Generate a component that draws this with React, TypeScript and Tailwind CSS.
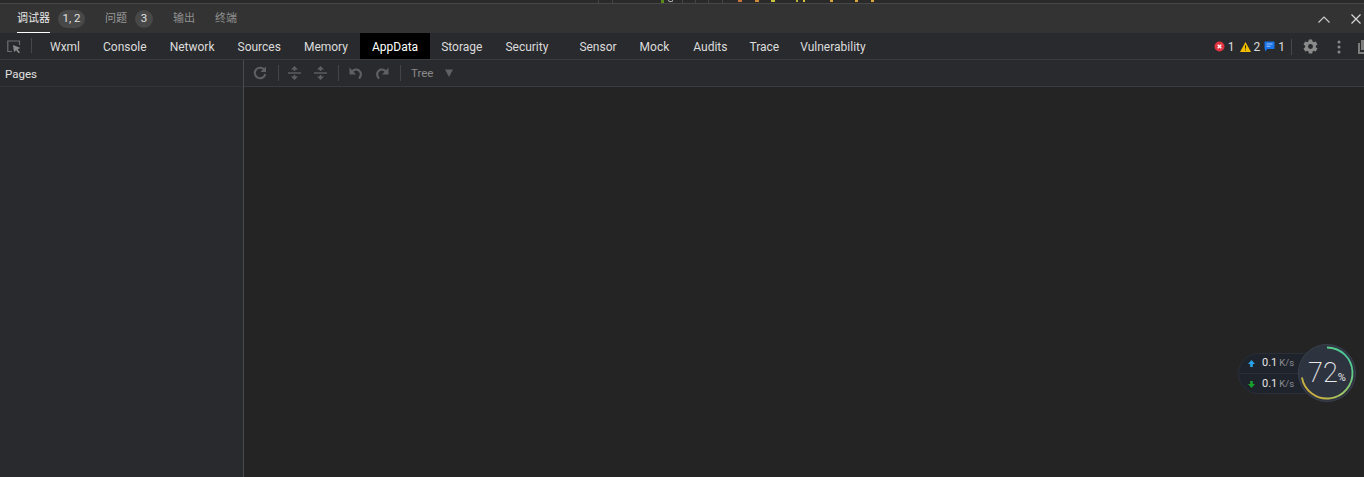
import React from "react";

const font = { fontFamily: '"Roboto","Noto Sans","Noto Sans CJK SC",sans-serif' };

const tabs: [string, string][] = [
  ["Wxml", "ml-[6px]"],
  ["Console", "-ml-px"],
  ["Network", "-ml-px"],
  ["Sources", "-ml-px"],
  ["Memory", "-ml-px"],
  ["AppData", ""],
  ["Storage", "-ml-px"],
  ["Security", "-ml-px"],
  ["Sensor", "ml-[7px]"],
  ["Mock", "-ml-px"],
  ["Audits", ""],
  ["Trace", "-ml-[2px]"],
  ["Vulnerability", "-ml-[3px]"],
];

function Top() {
  const line = "w-px h-full bg-[#454545]";
  return (
    <div className="h-[3px] bg-[#2a2a2a] flex overflow-hidden">
      <div className={`ml-[598px] ${line}`} />
      <div className={`ml-[13px] ${line}`} />
      <div className="ml-[48px] w-[3px] h-full bg-[#5b8a1c]" />
      <div className="ml-[4px] w-[5px] h-[2px] border-b border-x border-[#b8b8b8] rounded-b-full" />
      <div className={`ml-[9px] ${line}`} />
      <div className={`ml-[12px] ${line}`} />
      <div className={`ml-[12px] ${line}`} />
      <div className={`ml-[13px] ${line}`} />
      <div className="ml-[15px] w-[4px] h-[2px] bg-[#c8763a]" />
      <div className="ml-[13px] w-[4px] h-[2px] bg-[#d08a3a]" />
      <div className="ml-[12px] w-[4px] h-[2px] bg-[#c9c23e]" />
      <div className="ml-[21px] w-[2px] h-[2px] bg-[#b8b23a]" />
      <div className="ml-[5px] w-[2px] h-[2px] bg-[#d8c33c]" />
      <div className="ml-[25px] w-[3px] h-[2px] bg-[#d8a83c]" />
      <div className="ml-[22px] w-[3px] h-[2px] bg-[#d8a83c]" />
      <div className="ml-[13px] w-[3px] h-[2px] bg-[#d8a83c]" />
    </div>
  );
}

function Header() {
  return (
    <div className="h-[30px] bg-[#333333] border-t border-[#474747] flex items-center text-[11px] relative whitespace-nowrap">
      <div className="ml-[17px] h-full w-[33px] border-b border-white flex items-center pt-[2px] text-[#e8e8e8]">调试器</div>
      <div className="ml-[8px] mt-px w-[27px] h-[18px] rounded-full bg-[#484848] text-[11.500px] text-[#e0e0e0] flex items-center justify-center">1, 2</div>
      <div className="ml-[20px] pt-[2px] text-[#9a9a9a] w-[22px]">问题</div>
      <div className="ml-[8px] mt-px w-[18px] h-[18px] rounded-full bg-[#484848] text-[11.500px] text-[#e0e0e0] flex items-center justify-center">3</div>
      <div className="ml-[20px] pt-[2px] text-[#8f8f8f] w-[22px]">输出</div>
      <div className="ml-[20px] pt-[2px] text-[#8f8f8f] w-[22px]">终端</div>
      <div className="ml-auto flex items-center pt-px">
        <svg width="12" height="7" viewBox="0 0 12 7" className="mr-[21px]" fill="none" stroke="#cfcfcf" strokeWidth="1.1"><path d="M.5 6.500 6 1l5.500 5.500" /></svg>
        <svg width="10" height="10" viewBox="0 0 10 10" className="mr-[3px]" fill="none" stroke="#d8d8d8" strokeWidth="1.2"><path d="M.5.5l9 9M9.500.5l-9 9" /></svg>
      </div>
    </div>
  );
}

function TabBar() {
  return (
    <div className="h-[27px] bg-[#292a2d] border-b border-[#3a3b3e] flex items-stretch text-[12px] text-[#dcdcdc] whitespace-nowrap">
      <div className="w-[32px] flex items-center relative shrink-0">
        <svg width="15" height="14" viewBox="0 0 15 14" className="ml-[7px] mt-px" fill="none">
          <path d="M12.500 5V1H.8v10.500H5" stroke="#6e6e6e" strokeWidth="1.2" />
          <path d="M6 5l7.500 3-3 1.200 2.500 3-1.400 1.100-2.400-3L7 12z" fill="#8a8a8a" />
        </svg>
        <div className="absolute right-0 top-[5px] h-[15px] w-px bg-[#47484b]" />
      </div>
      {tabs.map(([t, m]) => (
        <div key={t} className={`${m} px-[12px] shrink-0 flex items-center pt-[2px] ${t === "AppData" ? "bg-black text-white" : ""}`}>{t}</div>
      ))}
      <div className="ml-auto flex items-center pt-[1px] -mr-[3px] overflow-hidden">
        <svg width="11" height="11" viewBox="0 0 11 11"><circle cx="5.500" cy="5.500" r="5" fill="#e0333f" /><path d="M3.700 3.700l3.600 3.600M7.300 3.700l-3.600 3.600" stroke="#fff" strokeWidth="1.300" /></svg>
        <span className="ml-[3px]">1</span>
        <svg width="11" height="10" viewBox="0 0 11 10" className="ml-[5px]"><path d="M5.500 0 11 10H0z" fill="#f2bd00" /><path d="M5.500 3.200v3.400M5.500 7.600v1" stroke="#3a3000" strokeWidth="1" /></svg>
        <span className="ml-[3px]">2</span>
        <svg width="11" height="11" viewBox="0 0 11 11" className="ml-[4px]"><path d="M1 .5h9a.8.8 0 0 1 .5.5v6.500a.8.8 0 0 1-.5.5H3.500L1 10.500V8a.8.8 0 0 1-.5-.5V1A.8.8 0 0 1 1 .5z" fill="#1a73e8" /><path d="M2.500 3h6M2.500 5.300h4" stroke="#9cc4f8" strokeWidth="1" /></svg>
        <span className="ml-[3px]">1</span>
        <div className="ml-[6px] h-[16px] w-px bg-[#47484b]" />
        <svg width="17" height="17" viewBox="0 0 24 24" className="ml-[10px]" fill="#8a8a8a"><path fillRule="evenodd" d="M19.400 13c.04-.33.06-.66.06-1s-.02-.67-.06-1l2.100-1.600c.2-.15.25-.42.120-.64l-2-3.460c-.12-.22-.38-.3-.6-.22l-2.500 1a7.300 7.300 0 0 0-1.700-1l-.38-2.650A.49.49 0 0 0 14 2h-4c-.25 0-.46.18-.49.42l-.38 2.650c-.6.25-1.170.59-1.700 1l-2.500-1a.49.49 0 0 0-.6.22l-2 3.460c-.13.22-.07.49.12.64L4.570 11a7.900 7.900 0 0 0 0 2l-2.110 1.600c-.19.15-.25.42-.12.64l2 3.460c.12.22.38.3.6.22l2.500-1c.52.4 1.100.74 1.700 1l.38 2.650c.03.24.24.42.49.42h4c.25 0 .46-.18.49-.42l.38-2.650c.6-.26 1.170-.59 1.700-1l2.500 1c.22.08.48 0 .6-.22l2-3.460a.5.500 0 0 0-.12-.64zM12 15.500a3.500 3.500 0 1 1 0-7 3.500 3.500 0 0 1 0 7z" /></svg>
        <svg width="4" height="14" viewBox="0 0 4 14" className="ml-[18px]" fill="#8a8a8a"><circle cx="2" cy="2" r="1.500" /><circle cx="2" cy="7" r="1.500" /><circle cx="2" cy="12" r="1.500" /></svg>
        <svg width="9" height="14" viewBox="0 0 9 14" className="ml-[17px]" fill="#7d7d7d"><path d="M3 0h6v10H3zM0 3h2v9h7v2H0z" /></svg>
      </div>
    </div>
  );
}

const IC = "#5f6063";

function Toolbar() {
  const sep = <div className="w-px h-[16px] bg-[#434447]" />;
  return (
    <div className="h-[27px] border-b border-[#3a3b3e] bg-[#292a2d] flex items-center">
      <svg width="14" height="14" viewBox="0 0 14 14" className="ml-[9px]" fill="none">
        <path d="M11.800 4.500A5.300 5.300 0 1 0 12.300 8" stroke={IC} strokeWidth="2" />
        <path d="M13 .5v5.500H7.500z" fill={IC} />
      </svg>
      <div className="ml-[11px]">{sep}</div>
      {[0, 1].map((i) => (
        <svg key={i} width="13" height="14" viewBox="0 0 13 14" className={i ? "ml-[13px]" : "ml-[9px]"} fill={IC}>
          <path d="M6.500 0 10 3.500H3zM6.500 14 3 10.500h7z" />
          <path d="M0 6.300h13v1.400H0z" />
          <path d="M5.700 3h1.600v2H5.700zM5.700 9h1.600v2H5.700z" />
        </svg>
      ))}
      <div className="ml-[11px]">{sep}</div>
      <svg width="14" height="14" viewBox="0 0 14 14" className="ml-[10px]" fill="none">
        <path d="M3 5.500C5 3.500 8 3 10 4.500c2.500 2 2.500 5.500 0 8" stroke={IC} strokeWidth="2.200" />
        <path d="M.5 1.500v7H7z" fill={IC} />
      </svg>
      <svg width="14" height="14" viewBox="0 0 14 14" className="ml-[12px]" fill="none">
        <path d="M11 5.500C9 3.500 6 3 4 4.500c-2.500 2-2.500 5.500 0 8" stroke={IC} strokeWidth="2.200" />
        <path d="M13.500 1.500v7H7z" fill={IC} />
      </svg>
      <div className="ml-[11px]">{sep}</div>
      <span className="ml-[10px] w-[24px] pt-[1px] text-[11.500px] text-[#8a8a8a]">Tree</span>
      <svg width="8" height="8" viewBox="0 0 8 8" className="ml-[10px]" fill="#606164"><path d="M0 .5h8L4 8z" /></svg>
    </div>
  );
}

function Gauge() {
  return (
    <div className="absolute left-[1238px] top-[344px] w-[118px] h-[58px] whitespace-nowrap">
      <div className="absolute left-0 top-[9px] w-[80px] h-[41px] rounded-l-full bg-[#1f232c] border border-[#2a2e37] text-white">
        <div className="h-[20px] flex items-center border-b border-[#2a2e37] pl-[9px]">
          <svg width="7" height="7" viewBox="0 0 8 8" fill="#2aa4e8"><path d="M4 0 8 4.500H5.500V8h-3V4.500H0z" /></svg>
          <span className="ml-[7px] text-[11px] text-[#e6e6e6]">0.1</span>
          <span className="ml-[2px] text-[9.500px] text-[#8b8f96]">K/s</span>
        </div>
        <div className="h-[20px] flex items-center pl-[9px] pt-[1px]">
          <svg width="7" height="7" viewBox="0 0 8 8" fill="#17a02c"><path d="M4 8 8 3.500H5.500V0h-3v3.500H0z" /></svg>
          <span className="ml-[7px] text-[11px] text-[#e6e6e6]">0.1</span>
          <span className="ml-[2px] text-[9.500px] text-[#8b8f96]">K/s</span>
        </div>
      </div>
      <div className="absolute left-[60px] top-0 w-[58px] h-[58px] rounded-full bg-[#2e3340] border border-[#3a3f4b] flex items-center justify-center text-[#e8e8e8]">
        <svg width="58" height="58" viewBox="0 0 58 58" className="absolute -left-px -top-px" fill="none" strokeWidth="1.800">
          <defs>
            <linearGradient id="g" x1="1" y1="0" x2="0" y2="1">
              <stop offset="0" stopColor="#2fc9a8" />
              <stop offset="0.55" stopColor="#9ecb62" />
              <stop offset="1" stopColor="#e0a030" />
            </linearGradient>
          </defs>
          <path d="M29 3.500A25.500 25.500 0 1 1 3.900 33.500" stroke="url(#g)" />
        </svg>
        <span className="text-[27px] font-extralight leading-none">72</span>
        <span className="text-[11px] mt-[11px]">%</span>
      </div>
    </div>
  );
}

export default function App() {
  return (
    <div className="w-[1364px] h-[477px] relative overflow-hidden bg-[#242424] flex flex-col" style={font}>
      <Top />
      <Header />
      <TabBar />
      <div className="flex-1 flex min-h-0">
        <div className="w-[244px] shrink-0 bg-[#292a2d] border-r border-[#4a4b4e]">
          <div className="h-[27px] border-b border-[#323336] flex items-center pl-[5px] pt-[4px] text-[11.500px] text-[#e0e0e0]">Pages</div>
        </div>
        <div className="flex-1 min-w-0">
          <Toolbar />
        </div>
      </div>
      <Gauge />
    </div>
  );
}
